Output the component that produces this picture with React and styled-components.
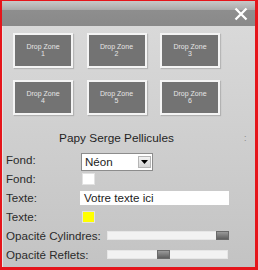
import React from "react";
import styled, { createGlobalStyle } from "styled-components";

const GlobalStyle = createGlobalStyle`
  body {
    margin: 0;
    font-family: "Liberation Sans", Arial, sans-serif;
  }
`;

const zones = [1, 2, 3, 4, 5, 6];

const App = () => {
  return (
    <>
      <GlobalStyle />
      <Panel>
        <Header>
          <CloseIcon width="14" height="14" viewBox="0 0 14 14">
            <path d="M1.5 1.5 L12.5 12.5 M12.5 1.5 L1.5 12.5" />
          </CloseIcon>
        </Header>

        <Body>
          <ZoneGrid>
            {zones.map((n) => (
              <DropZone key={n}>
                <span>Drop Zone</span>
                <span>{n}</span>
              </DropZone>
            ))}
          </ZoneGrid>

          <TitleRow>
            <h1>Papy Serge Pellicules</h1>
            <Grip>:</Grip>
          </TitleRow>

          <Form>
            <Row>
              <Label>Fond:</Label>
              <Select>
                <span>Néon</span>
                <SelectButton>
                  <svg width="7" height="4" viewBox="0 0 7 4">
                    <path d="M0 0 H7 L3.5 4 Z" fill="#000" />
                  </svg>
                </SelectButton>
              </Select>
            </Row>
            <Row>
              <Label>Fond:</Label>
              <Swatch $color="#ffffff" />
            </Row>
            <Row>
              <Label>Texte:</Label>
              <TextInput>Votre texte ici</TextInput>
            </Row>
            <Row>
              <Label>Texte:</Label>
              <Swatch $color="#ffff00" />
            </Row>
            <Row>
              <Label $wide>Opacité Cylindres:</Label>
              <Slider>
                <Thumb style={{ left: "108px" }} />
              </Slider>
            </Row>
            <Row>
              <Label $wide>Opacité Reflets:</Label>
              <Slider>
                <Thumb style={{ left: "49px" }} />
              </Slider>
            </Row>
          </Form>
        </Body>
      </Panel>
    </>
  );
};

export default App;

const Panel = styled.div`
  width: 258px;
  height: 270px;
  box-sizing: border-box;
  border-style: solid;
  border-color: #e5151b;
  border-width: 1px 3px 3px 2px;
  display: flex;
  flex-direction: column;
  overflow: hidden;
`;

const Header = styled.div`
  height: 25px;
  flex-shrink: 0;
  display: flex;
  align-items: center;
  justify-content: flex-end;
  padding-right: 7px;
  background: linear-gradient(
    #c8c8c8 0%,
    #ababab 34%,
    #8e8e8e 36%,
    #898989 100%
  );
`;

const CloseIcon = styled.svg`
  margin-top: 1px;
  path {
    stroke: #ffffff;
    stroke-width: 2.3;
    fill: none;
  }
`;

const Body = styled.div`
  flex: 1;
  background: linear-gradient(#d9d9d9, #c3c3c3);
  border-left: 1px solid #e4e4e4;
`;

const ZoneGrid = styled.div`
  display: grid;
  grid-template-columns: repeat(3, 60px);
  grid-auto-rows: 35px;
  column-gap: 13.5px;
  row-gap: 12px;
  padding: 7px 0 0 10px;
`;

const DropZone = styled.div`
  box-sizing: border-box;
  border: 2px solid #f4f4f4;
  background: #737373;
  box-shadow: 1px 1px 1px rgba(0, 0, 0, 0.15);
  display: flex;
  flex-direction: column;
  align-items: center;
  justify-content: center;
  color: #e6e6e6;
  font-size: 7px;
  line-height: 7px;
  padding-bottom: 2px;
`;

const TitleRow = styled.div`
  display: flex;
  align-items: center;
  height: 19px;
  margin-top: 13px;

  h1 {
    flex: 1;
    margin: 0;
    text-align: center;
    font-size: 11.8px;
    font-weight: 400;
    color: #1f1f1f;
  }
`;

const Grip = styled.div`
  width: 25px;
  padding-left: 14px;
  box-sizing: border-box;
  font-size: 9px;
  color: #8a8a8a;
`;

const Form = styled.div`
  display: flex;
  flex-direction: column;
  padding-left: 3px;
  margin-top: 3px;
`;

const Row = styled.div`
  display: flex;
  align-items: center;
  height: 19px;
`;

const Label = styled.span`
  width: ${(p) => (p.$wide ? "98px" : "75px")};
  flex-shrink: 0;
  white-space: nowrap;
  font-size: 11.6px;
  color: #2b2b2b;
`;

const Select = styled.div`
  box-sizing: border-box;
  width: 72px;
  height: 18px;
  margin-top: 4px;
  background: #fff;
  border: 1px solid #8c8c8c;
  display: flex;
  align-items: center;
  justify-content: space-between;
  padding: 0 1px 0 3px;
  font-size: 11.6px;
  color: #222;
`;

const SelectButton = styled.div`
  box-sizing: border-box;
  width: 13px;
  height: 12px;
  background: linear-gradient(#f2f2f2, #d6d6d6);
  border: 1px solid #b5b5b5;
  display: flex;
  align-items: center;
  justify-content: center;
`;

const Swatch = styled.div`
  width: 13px;
  height: 12px;
  margin-left: 1px;
  background: ${(p) => p.$color};
  border: 1px solid #e2e2e2;
  box-sizing: border-box;
`;

const TextInput = styled.div`
  box-sizing: border-box;
  width: 149px;
  height: 14px;
  margin-left: -1px;
  background: #fff;
  padding-left: 4px;
  font-size: 11.6px;
  line-height: 14px;
  color: #222;
`;

const Slider = styled.div`
  position: relative;
  box-sizing: border-box;
  width: 121px;
  height: 9px;
  margin-left: 3px;
  background: #f2f2f2;
  border: 1px solid #e6e6e6;
`;

const Thumb = styled.div`
  position: absolute;
  top: -1px;
  width: 13px;
  height: 9px;
  box-sizing: border-box;
  background: linear-gradient(#9a9a9a, #5e5e5e);
  border: 1px solid #6a6a6a;
`;
